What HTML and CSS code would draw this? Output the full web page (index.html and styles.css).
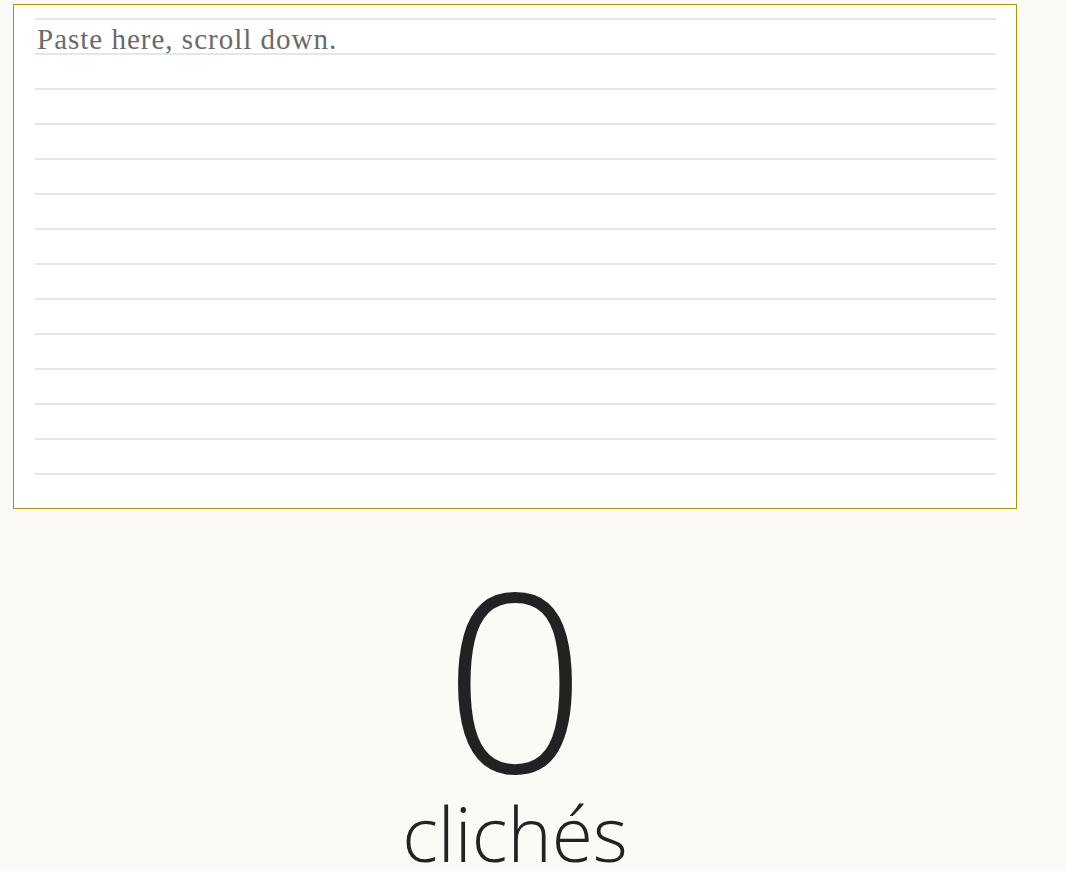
FILE: index.html
```html
<!DOCTYPE html>
<html lang="en">
<head>
<meta charset="utf-8">
<title>Clichés</title>
<link rel="stylesheet" href="styles.css">
</head>
<body>
<main class="page">
  <div class="paper">
    <textarea class="paste" placeholder="Paste here, scroll down."></textarea>
  </div>
  <section class="count">
    <div class="count-number">0</div>
    <div class="count-label">clichés</div>
  </section>
</main>
</body>
</html>
```

FILE: styles.css
```css
html, body {
  margin: 0;
  padding: 0;
  background: #fbfaf6;
}
body {
  overflow: hidden;
}
.page {
  width: 1004px;
  margin: 4px 0 0 13px;
}
.paper {
  box-sizing: border-box;
  border: 1px solid #ad9700;
  background: #ffffff;
  padding: 13px 20px 0 21px;
  height: 505px;
}
.paste {
  display: block;
  box-sizing: border-box;
  width: 100%;
  height: 490px;
  margin: 0;
  border: 0;
  outline: none;
  resize: none;
  padding: 4px 0 0 2px;
  font-family: "Liberation Serif", "DejaVu Serif", serif;
  font-size: 29px;
  letter-spacing: 1px;
  line-height: 35px;
  color: #666;
  background-color: transparent;
  background-image: repeating-linear-gradient(to bottom, #e6e6e6 0, #e6e6e6 2px, transparent 2px, transparent 35px);
}
.paste::placeholder {
  color: #6a6a6a;
  opacity: 1;
}
.count {
  text-align: center;
  font-family: "Open Sans", sans-serif;
  font-weight: 300;
  color: #222;
}
.count-number {
  font-size: 250px;
  line-height: 1;
  margin-top: 42px;
}
.count-label {
  font-size: 75px;
  line-height: 1;
  margin-top: -5px;
}
```
